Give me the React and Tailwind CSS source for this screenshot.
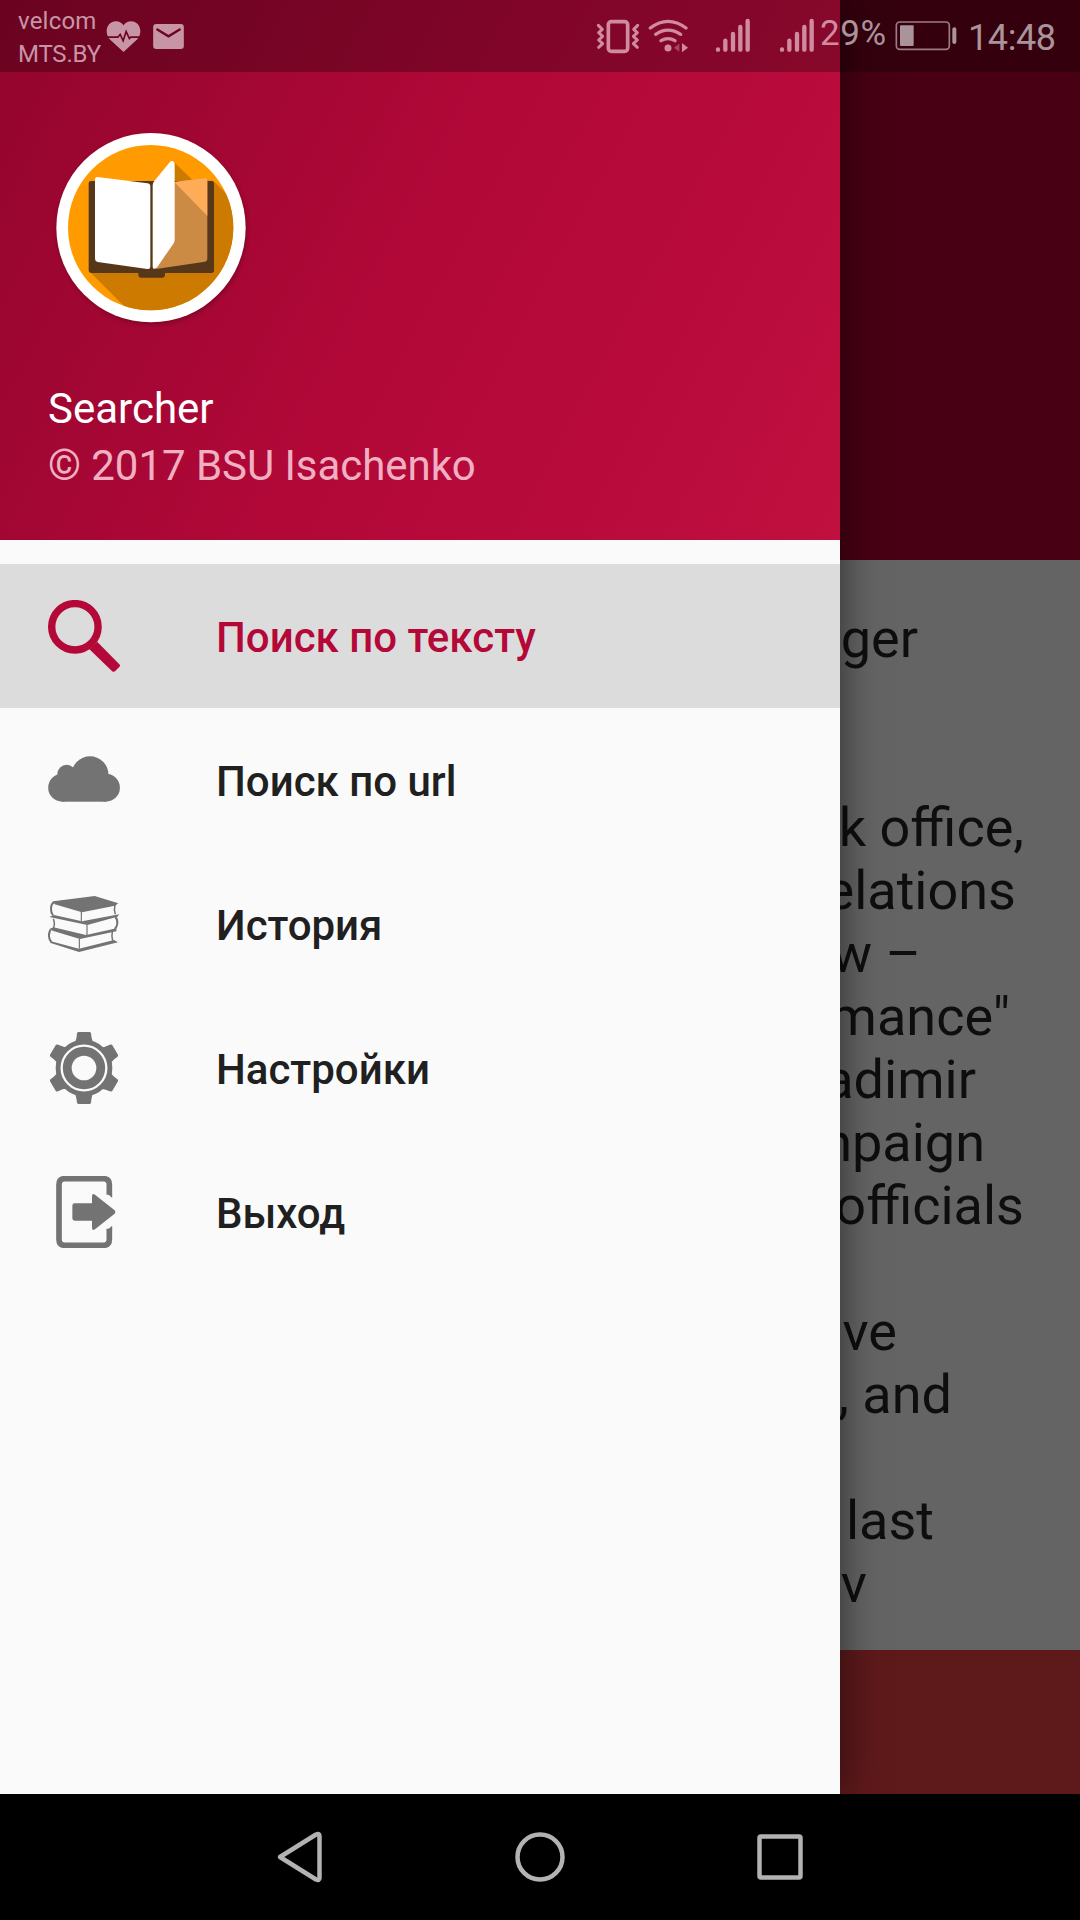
const SearchIcon = () => (
  <svg viewBox="0 0 72 72" className="size-[72px]" fill="#b30838">
    <circle cx="26.9" cy="26.8" r="23.2" fill="none" stroke="#b30838" strokeWidth="7.4" />
    <path d="M41.4 49.2 49.4 42 71.6 64.6Q72.4 65.8 71.5 66.8L67.3 71Q65.8 72.4 64.2 71.2Z" />
  </svg>
);

const CloudIcon = () => (
  <svg viewBox="0 0 72 72" className="size-[72px]" fill="#737373">
    <circle cx="14.200" cy="43.700" r="14" />
    <circle cx="18.700" cy="30" r="9.300" />
    <circle cx="42" cy="30.800" r="18.500" />
    <circle cx="57.900" cy="43.700" r="14" />
    <rect x="14" y="30" width="44" height="27.700" />
  </svg>
);

const BooksIcon = () => (
  <svg viewBox="144 84 216 216" className="size-[72px]" fill="none" stroke="#737373" strokeWidth="4.500">
    <path d="M160 124 284 108 355 130 345 137 246 157 164 133Z" fill="#737373" stroke="none" />
    <path d="M164 126Q153 130 153 147Q153 160 159 166" strokeWidth="6" />
    <path d="M148 171 162 165 246 184 358 163 352 170 262 195Z" fill="#737373" stroke="none" />
    <path d="M244 156V184M261 194V225M238 236V266" strokeWidth="3.500" />
    <path d="M345 135Q341 150 346 163M160 176Q166 191 160 206" />
    <path d="M346 171Q353 178 352 190Q351 202 344 207" strokeWidth="6" />
    <path d="M148 207 160 202 258 225 350 205 349 214 240 237 160 213Z" fill="#737373" stroke="none" />
    <path d="M152 209Q146 217 147 229Q148 240 154 246" strokeWidth="6" />
    <path d="M337 215Q334 229 338 242" />
    <path d="M150 243 237 266 342 240 354 247 237 276 152 249Z" fill="#737373" stroke="none" />
  </svg>
);

const GearIcon = () => (
  <svg viewBox="144 516 216 216" className="size-[72px]">
    <g fill="#737373">
      <circle cx="252" cy="624" r="85" />
      {[0, 60, 120, 180, 240, 300].map((a) => (
        <path key={a} transform={`rotate(${a} 252 624)`} d="M222 552Q230 541 231 520Q232 516 236 516H268Q272 516 273 520Q275 541 282 552Z" />
      ))}
    </g>
    <circle cx="252" cy="624" r="67" fill="none" stroke="#fafafa" strokeWidth="7" />
    <circle cx="252" cy="624" r="37" fill="#fafafa" />
  </svg>
);

const ExitIcon = () => (
  <svg viewBox="144 948 216 216" className="size-[72px]">
    <path d="M328 1004V974Q328 956 311 956H194Q177 956 177 974V1138Q177 1156 194 1156H311Q328 1156 328 1138V1106" fill="none" stroke="#737373" strokeWidth="17" />
    <path d="M319.500 998 336.500 1014V1002ZM319.500 1112 336.500 1097V1110Z" fill="#737373" />
    <path d="M224 1030H276V1008Q277 998 285 1004L343 1050Q349 1056 343 1062L285 1108Q277 1114 276 1104V1082H224Q217 1082 217 1075V1037Q217 1030 224 1030Z" fill="#737373" />
  </svg>
);

const BookLogo = () => (
  <svg viewBox="45 36 576 576" className="size-[192px] drop-shadow-[1px_2px_2px_rgba(0,0,0,0.25)]">
    <defs>
      <clipPath id="disc"><circle cx="332" cy="323" r="248" /></clipPath>
    </defs>
    <circle cx="333" cy="323" r="284" fill="#fff" />
    <circle cx="332" cy="323" r="248" fill="#ff9b00" />
    <path clipPath="url(#disc)" d="M150 456 260 566 420 620 620 500 620 282 520 182 460 182 399 124V300Z" fill="#cc7b00" />
    <path d="M153 183H514Q522 183 522 191V451Q522 459 514 459H375V464Q375 473 366 473H304Q295 473 295 464V459H155Q146 459 146 450V190Q146 183 153 183Z" fill="#56371a" />
    <path d="M403 186 496 174Q502 174 502 181V417Q502 424 495 425L348 447Z" fill="#cb8b45" />
    <path d="M403 186 496 174Q502 174 502 181V288Z" fill="#ffac58" />
    <path d="M173 171 322 190Q331 191 331 199V440Q331 448 322 447L173 426Q165 424 165 416V178Q165 171 173 171Z" fill="#fff" />
    <path d="M338 196Q338 189 343 183L389 127Q394 121 399 124Q404 126 404 132V360Q404 366 400 371L352 441Q347 448 341 446Q338 445 338 440Z" fill="#fff" />
  </svg>
);

const HeartIcon = () => (
  <svg viewBox="318 60 106 98" className="h-[33px] w-[35px]">
    <path d="M371 156 330 118Q320 107 320 93C320 76 332 63 348 63Q362 63 371 75Q380 63 394 63C410 63 422 76 422 93Q422 107 412 118Z" fill="#c895a7" />
    <path d="M320 111H354L361 103 370 122 379 94 389 115 393 111H422" fill="none" stroke="#6e0322" strokeWidth="5" />
  </svg>
);

const MailIcon = () => (
  <svg viewBox="459 72 92 75" className="h-[25px] w-[31px]">
    <rect x="459" y="72" width="92" height="75" rx="9" fill="#c895a7" />
    <path d="M469 87 505 109 541 87" fill="none" stroke="#6e0322" strokeWidth="7" />
  </svg>
);

const VibrateIcon = () => (
  <svg viewBox="48 57 132 105" className="h-[35px] w-[44px]" fill="none" stroke="#d08ba0" strokeWidth="9" strokeLinecap="round" strokeLinejoin="round">
    <rect x="85" y="65" width="58" height="89" rx="9" strokeWidth="11" />
    <path d="M55 76 67 88 56 98 68 109 56 120 68 131 56 142" />
    <path d="M173 76 161 88 172 98 160 109 172 120 160 131 172 142" />
  </svg>
);

const WifiIcon = () => (
  <svg viewBox="204 57 123 105" className="h-[35px] w-[41px]">
    <g fill="none" stroke="#d08ba0" strokeWidth="10" strokeLinecap="round">
      <path d="M211 84Q264 44 318 84" />
      <path d="M227 103Q264 78 302 103" />
      <path d="M243 122Q264 110 285 122" />
    </g>
    <circle cx="264" cy="144" r="10.500" fill="#d08ba0" />
    <path d="M282 143 298 131V155Z" fill="#a24a65" />
    <path d="M306 129 324 143 306 157Z" fill="#d08ba0" />
  </svg>
);

const SignalIcon = () => (
  <svg viewBox="405 54 108 105" className="h-[35px] w-[36px]" stroke="#d08ba0" strokeWidth="13" strokeLinecap="round">
    <path d="M414 148.500V149M436 122V149M459 102V149M481 81V149M503 63V149" />
  </svg>
);

const BatteryIcon = () => (
  <svg viewBox="945 60 186 93" className="h-[31px] w-[62px]">
    <rect x="949" y="66" width="159" height="82" rx="10" fill="none" stroke="#9c7b85" strokeWidth="5" />
    <rect x="960" y="76" width="41" height="62" rx="3" fill="#ab939b" />
    <rect x="1117" y="82" width="12" height="50" rx="6" fill="#ab939b" />
  </svg>
);

const items = [
  { label: "Поиск по тексту", Icon: SearchIcon, active: true },
  { label: "Поиск по url", Icon: CloudIcon },
  { label: "История", Icon: BooksIcon },
  { label: "Настройки", Icon: GearIcon },
  { label: "Выход", Icon: ExitIcon },
];

// Article lines with the distance of each line's end from the screen's right edge.
const lines = [
  ["ger", 162],
  ["", 0],
  ["", 0],
  ["k office,", 56],
  ["elations", 64],
  ["w –", 159],
  ['mance"', 70],
  ["adimir", 104],
  ["mpaign", 95],
  ["officials", 56],
  ["", 0],
  ["ve", 183],
  [", and", 128],
  ["", 0],
  ["last", 146],
  ["v", 213],
];

function Article() {
  return (
    <main className="flex h-[1794px] flex-col bg-[#646464]">
      <div className="h-[560px] bg-[#480014]" />
      <div className="flex-1 pt-[47px] text-right text-[54px] leading-[63px] text-[#0e0e0e]">
        {lines.map(([text, end], i) => (
          <p key={i} className="h-[63px] whitespace-pre" style={{ paddingRight: end }}>{text}</p>
        ))}
      </div>
      <div className="h-[144px] bg-[#5e191b]" />
    </main>
  );
}

function Drawer() {
  return (
    <aside className="absolute left-0 top-0 h-[1794px] w-[840px] bg-[#fafafa] shadow-[0_0_38px_rgba(0,0,0,0.55)]">
      <header className="h-[540px] bg-linear-[118deg,#92052d_0%,#b10838_48%,#b80b3c_75%,#c01040_100%] pt-[132px]">
        <div className="pl-[55px]"><BookLogo /></div>
        <p className="mt-[56px] pl-[48px] text-[42px] leading-[57px] text-white">Searcher</p>
        <p className="pl-[48px] text-[42px] leading-[57px] tracking-[-0.05px] text-[#f1b0c2]">© 2017 BSU Isachenko</p>
      </header>
      <nav className="pt-[24px]">
        {items.map(({ label, Icon, active }) => (
          <a key={label} className={`flex h-[144px] items-center gap-[96px] px-[48px] text-[42px] font-medium ${active ? "bg-[#dcdcdc] text-[#b30838]" : "text-[#202020]"}`}>
            <Icon />
            <span className="mt-[3px]">{label}</span>
          </a>
        ))}
      </nav>
    </aside>
  );
}

function StatusBar() {
  return (
    <div className="absolute left-0 top-0 flex h-[72px] w-full items-start bg-black/27">
      <div className="w-[88px] pl-[18px] pt-[5px] text-[24px] leading-[32.500px] text-[#c895a7]">
        <p className="tracking-[0.2px]">velcom</p>
        <p className="tracking-[-0.2px]">MTS.BY</p>
      </div>
      <div className="ml-[18px] mt-[20px]"><HeartIcon /></div>
      <div className="ml-[12px] mt-[24px]"><MailIcon /></div>
      <div className="ml-auto mt-[19px]"><VibrateIcon /></div>
      <div className="ml-[8px] mt-[19px]"><WifiIcon /></div>
      <div className="ml-[26px] mt-[18px]"><SignalIcon /></div>
      <div className="ml-[28px] mt-[18px]"><SignalIcon /></div>
      <p className="ml-[5px] mt-[14px] w-[67px] whitespace-nowrap text-[35px] leading-[40px] tracking-[0.6px]">
        <span className="text-[#d08ba0]">2</span>
        <span className="text-[#ab939b]">9%</span>
      </p>
      <div className="ml-[8px] mt-[20px]"><BatteryIcon /></div>
      <p className="ml-[11px] mr-[20px] mt-[17px] w-[92px] whitespace-nowrap text-[36px] leading-[42px] tracking-[-0.4px] text-[#ab939b]">14:48</p>
    </div>
  );
}

function NavigationBar() {
  return (
    <footer className="flex h-[126px] items-center justify-center bg-black">
      {[
        <path key="back" d="M7 27 43 4.500Q46.500 3 46.500 6V48Q46.500 51 43 49.500Z" />,
        <circle key="home" cx="27" cy="27" r="22.500" />,
        <rect key="recent" x="6.500" y="6.500" width="41" height="41" rx="1.500" />,
      ].map((shape, i) => (
        <button key={i} className="flex w-[240px] justify-center">
          <svg viewBox="0 0 54 54" className="size-[54px]" fill="none" stroke="#b3b3b3" strokeWidth="4.500" strokeLinejoin="round">{shape}</svg>
        </button>
      ))}
    </footer>
  );
}

export default function App() {
  return (
    <div className="relative h-[1920px] w-[1080px] overflow-hidden bg-black font-['Roboto',sans-serif]">
      <Article />
      <Drawer />
      <StatusBar />
      <NavigationBar />
    </div>
  );
}
